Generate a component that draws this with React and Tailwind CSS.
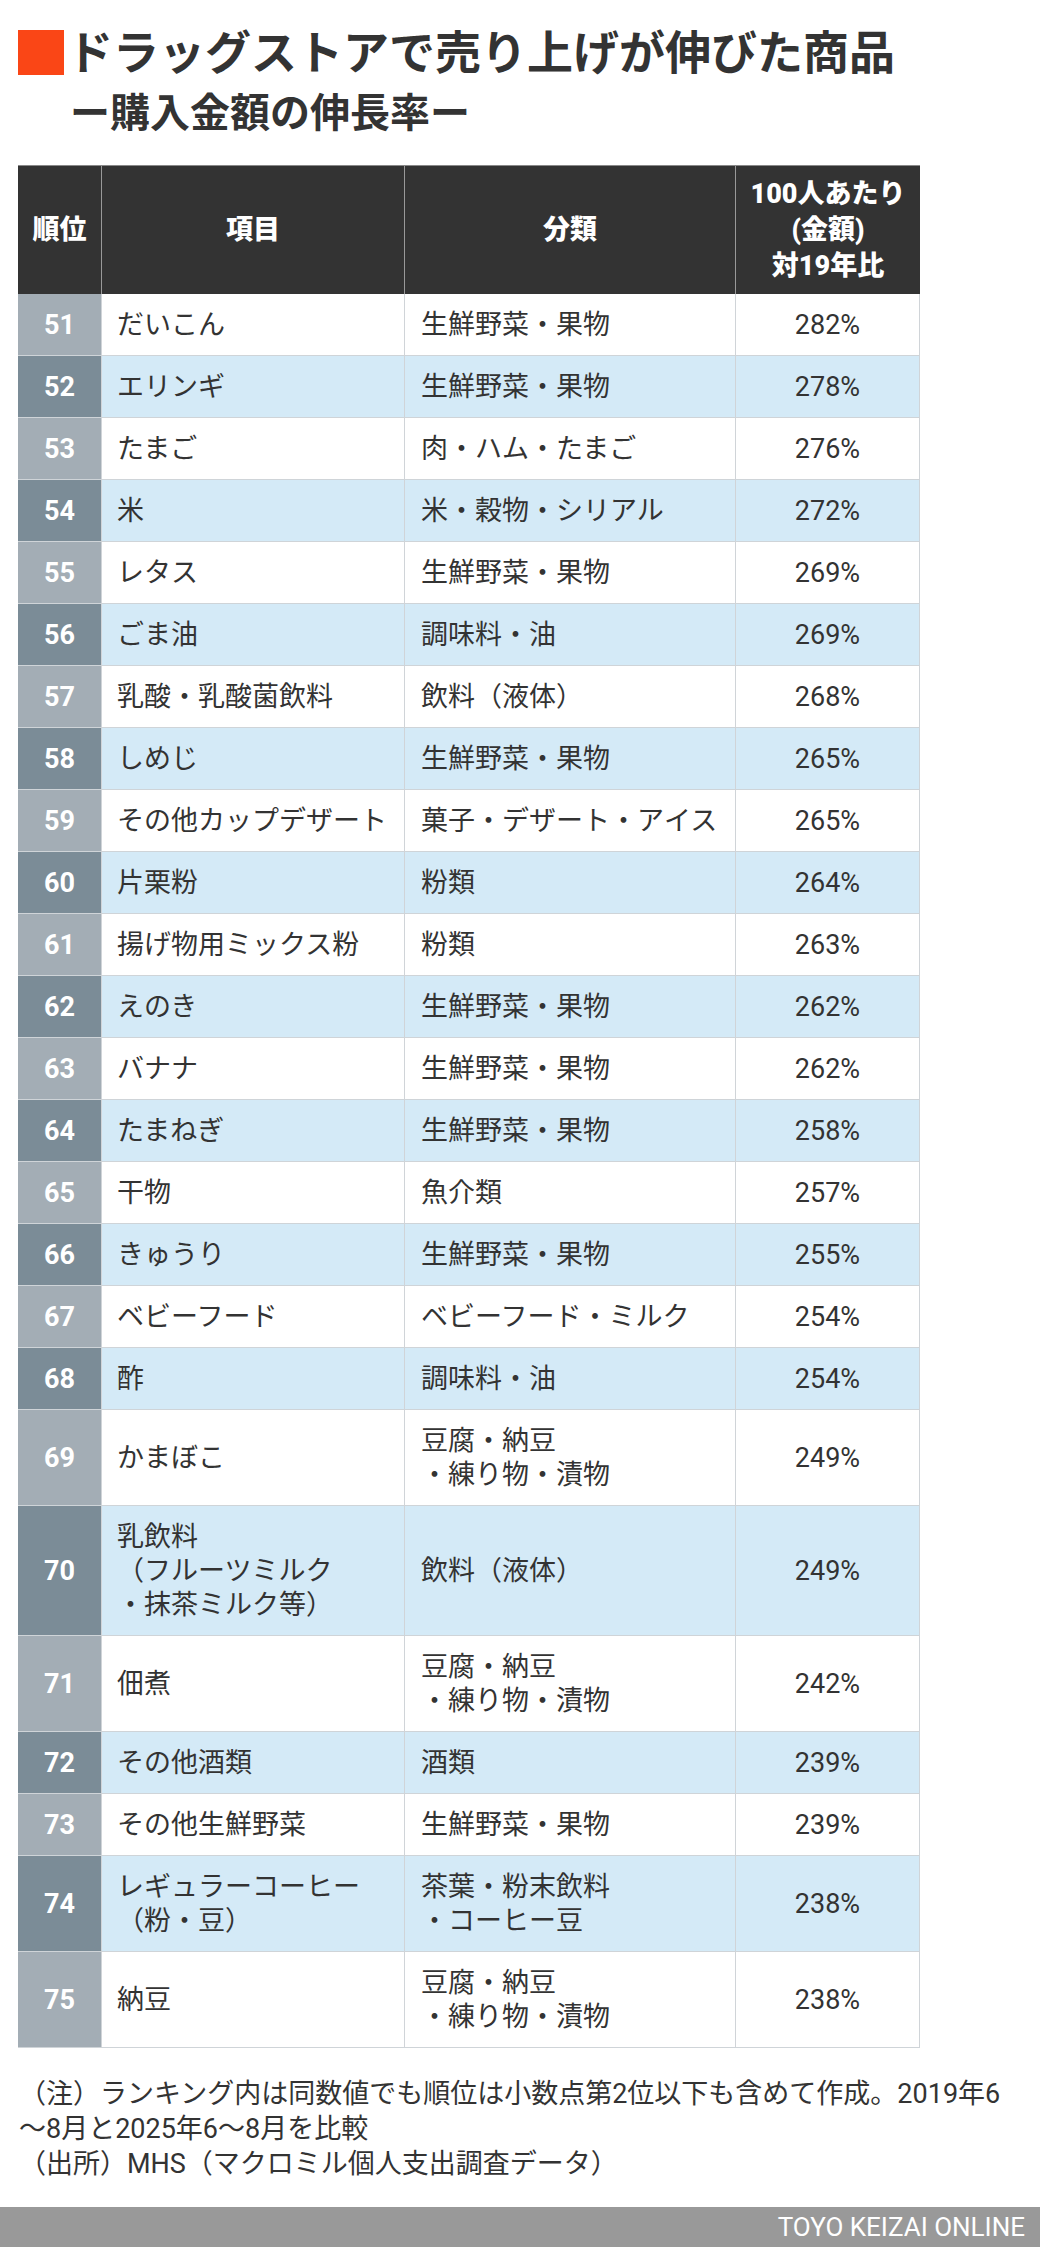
import React from "react";

const rows = [
  ["51", ["だいこん"], ["生鮮野菜・果物"], "282%"],
  ["52", ["エリンギ"], ["生鮮野菜・果物"], "278%"],
  ["53", ["たまご"], ["肉・ハム・たまご"], "276%"],
  ["54", ["米"], ["米・穀物・シリアル"], "272%"],
  ["55", ["レタス"], ["生鮮野菜・果物"], "269%"],
  ["56", ["ごま油"], ["調味料・油"], "269%"],
  ["57", ["乳酸・乳酸菌飲料"], ["飲料（液体）"], "268%"],
  ["58", ["しめじ"], ["生鮮野菜・果物"], "265%"],
  ["59", ["その他カップデザート"], ["菓子・デザート・アイス"], "265%"],
  ["60", ["片栗粉"], ["粉類"], "264%"],
  ["61", ["揚げ物用ミックス粉"], ["粉類"], "263%"],
  ["62", ["えのき"], ["生鮮野菜・果物"], "262%"],
  ["63", ["バナナ"], ["生鮮野菜・果物"], "262%"],
  ["64", ["たまねぎ"], ["生鮮野菜・果物"], "258%"],
  ["65", ["干物"], ["魚介類"], "257%"],
  ["66", ["きゅうり"], ["生鮮野菜・果物"], "255%"],
  ["67", ["ベビーフード"], ["ベビーフード・ミルク"], "254%"],
  ["68", ["酢"], ["調味料・油"], "254%"],
  ["69", ["かまぼこ"], ["豆腐・納豆", "・練り物・漬物"], "249%"],
  ["70", ["乳飲料", "（フルーツミルク", "・抹茶ミルク等）"], ["飲料（液体）"], "249%"],
  ["71", ["佃煮"], ["豆腐・納豆", "・練り物・漬物"], "242%"],
  ["72", ["その他酒類"], ["酒類"], "239%"],
  ["73", ["その他生鮮野菜"], ["生鮮野菜・果物"], "239%"],
  ["74", ["レギュラーコーヒー", "（粉・豆）"], ["茶葉・粉末飲料", "・コーヒー豆"], "238%"],
  ["75", ["納豆"], ["豆腐・納豆", "・練り物・漬物"], "238%"],
];

function Lines({ lines }) {
  return (
    <div className="whitespace-nowrap">
      {lines.map((l, i) => (
        <div key={i}>{l}</div>
      ))}
    </div>
  );
}

export default function App() {
  return (
    <div className="w-[1040px] h-[2247px] bg-white text-[#333] font-['Roboto','Noto_Sans_CJK_JP',sans-serif] flex flex-col">
      {/* Title */}
      <div className="flex items-center pl-[18px] pt-[30px] h-[75px]">
        <div className="w-[46px] h-[45px] bg-[#fa4616] shrink-0" />
        <h1 className="ml-[3px] text-[46px] leading-[46px] font-bold text-[#333] whitespace-nowrap">
          ドラッグストアで売り上げが伸びた商品
        </h1>
      </div>
      <div className="pl-[70px] mt-[19px] text-[40px] leading-[40px] font-bold text-[#333] whitespace-nowrap">
        ー購入金額の伸長率ー
      </div>

      {/* Table */}
      <div className="ml-[18px] mt-[31px] w-[902px]">
        <div className="grid grid-cols-[83px_303px_331px_185px] h-[129px] bg-[#333] text-white font-black text-[27px] border-t border-[#888]">
          <div className="flex items-center justify-center">順位</div>
          <div className="flex items-center justify-center border-l border-[#999]">項目</div>
          <div className="flex items-center justify-center border-l border-[#999]">分類</div>
          <div className="flex flex-col items-center justify-center border-l border-[#999] leading-[36px] text-center">
            <div>100人あたり</div>
            <div>(金額)</div>
            <div>対19年比</div>
          </div>
        </div>
        {rows.map(([rank, item, cat, val], idx) => {
          const blue = idx % 2 === 1;
          return (
            <div
              key={rank}
              className={
                "grid grid-cols-[83px_303px_331px_185px] border-b border-[#cfd4d8] text-[27px] leading-[34px] " +
                (blue ? "bg-[#d4eaf7]" : "bg-white")
              }
            >
              <div
                className={
                  "flex items-center justify-center text-white font-bold " +
                  (blue ? "bg-[#7b8c97]" : "bg-[#a3adb5]")
                }
              >
                {rank}
              </div>
              <div className="flex items-center pl-[15px] pt-[14px] pb-[13px] border-l border-[#d0d4d8]">
                <Lines lines={item} />
              </div>
              <div className="flex items-center pl-[16px] pt-[14px] pb-[13px] border-l border-[#d0d4d8]">
                <Lines lines={cat} />
              </div>
              <div className="flex items-center justify-center border-l border-r border-[#d0d4d8]">
                {val}
              </div>
            </div>
          );
        })}
      </div>

      {/* Notes */}
      <div className="pl-[19px] mt-[29px] text-[27px] leading-[35px] text-[#333] whitespace-nowrap">
        <div>（注）ランキング内は同数値でも順位は小数点第2位以下も含めて作成。2019年6</div>
        <div>〜8月と2025年6〜8月を比較</div>
        <div>（出所）MHS（マクロミル個人支出調査データ）</div>
      </div>

      <div className="flex-1" />
      <div className="h-[40px] bg-[#999] flex items-center justify-end pr-[15px]">
        <span className="text-white text-[26px] leading-none font-['Roboto',sans-serif]">TOYO KEIZAI ONLINE</span>
      </div>
    </div>
  );
}
